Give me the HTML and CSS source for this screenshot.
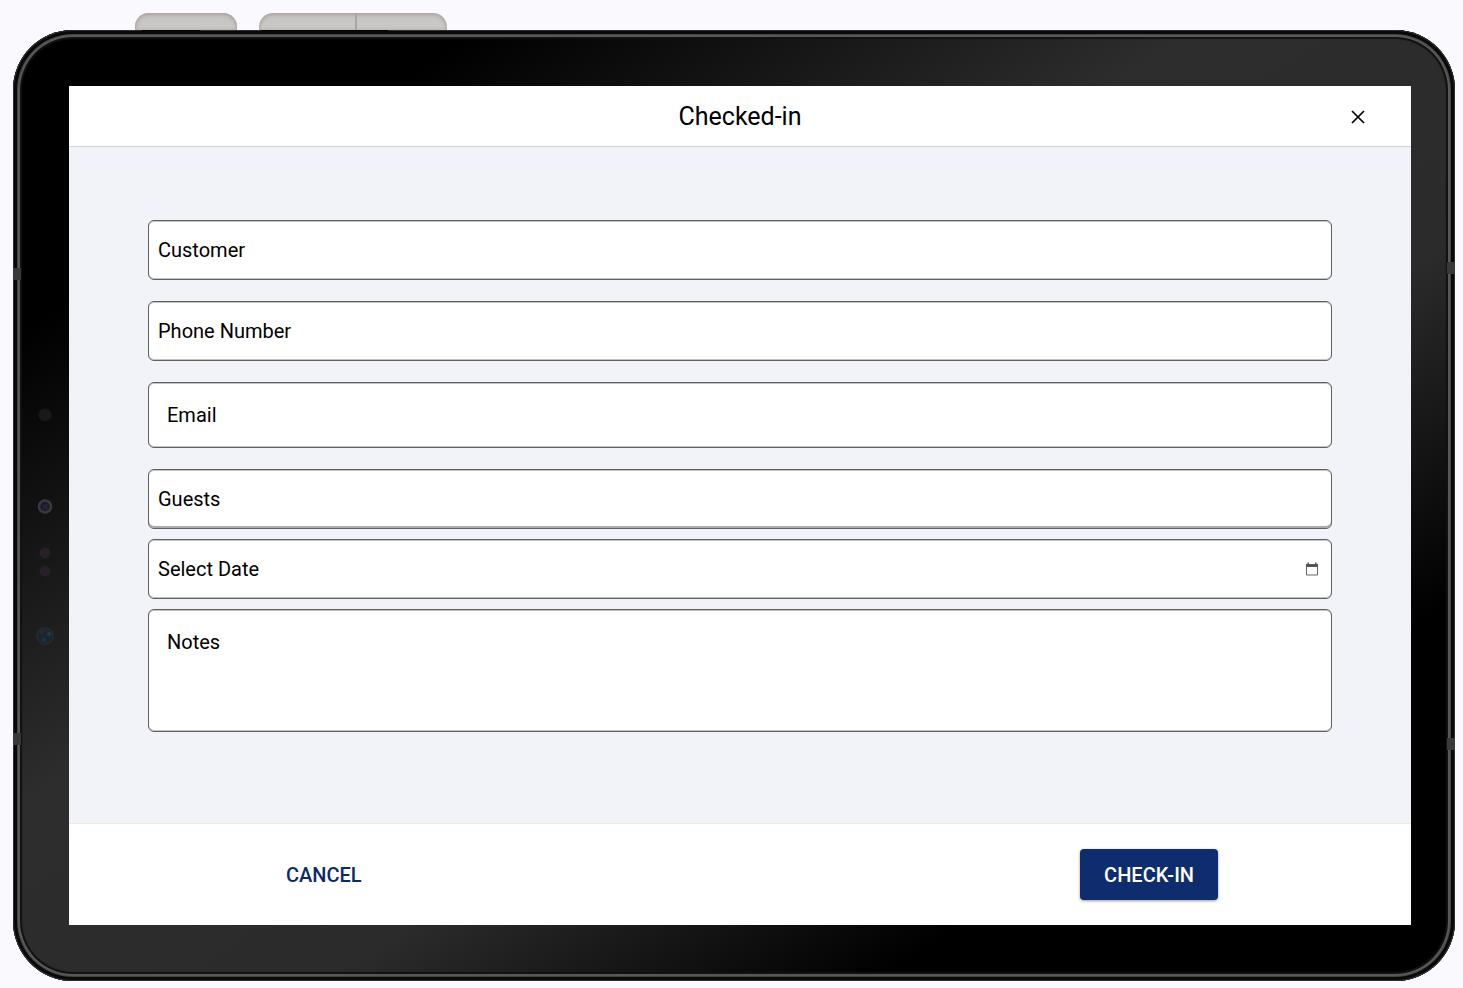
FILE: index.html
```html
<!DOCTYPE html>
<html lang="en">
<head>
<meta charset="utf-8">
<title>Checked-in</title>
<link rel="stylesheet" href="styles.css">
</head>
<body>
<div class="keys">
  <span class="key key-power"></span>
  <span class="key key-volume"></span>
</div>
<div class="tablet">
  <i class="band band-lt"></i><i class="band band-lb"></i><i class="band band-rt"></i><i class="band band-rb"></i>
  <svg class="sensors" width="24" height="260" viewBox="0 0 24 260" aria-hidden="true">
    <circle cx="12" cy="15" r="6.5" fill="#19181a"/>
    <circle cx="12" cy="106.500" r="6" fill="#1d1a29" stroke="#3b393d" stroke-width="2.5"/>
    <path d="M10 105l5 4M14 104l-4 5" stroke="#2a2342" stroke-width="2"/>
    <circle cx="12" cy="153" r="5.5" fill="#281f27"/>
    <circle cx="12" cy="171" r="5.5" fill="#281f2a"/>
    <circle cx="12" cy="236" r="8" fill="#1b252d" stroke="#252a2e" stroke-width="2"/>
    <circle cx="16" cy="234" r="2" fill="#203a48"/>
    <circle cx="11" cy="240" r="2" fill="#1d3644"/>
    <circle cx="9" cy="232" r="2" fill="#202d38"/>
  </svg>
  <main class="screen">
    <header class="header">
      <h1 class="title">Checked-in</h1>
      <button class="close" type="button" aria-label="Close">
        <svg width="14" height="14" viewBox="0 0 14 14"><path d="M1 1l12 12M13 1L1 13" stroke="#000" stroke-width="1.7"/></svg>
      </button>
    </header>
    <form class="form" id="checkin">
      <label class="field spaced"><span>Customer</span><input type="text"></label>
      <label class="field spaced"><span>Phone Number</span><input type="tel"></label>
      <label class="field field-inset spaced"><span>Email</span><input type="email"></label>
      <label class="field field-underlined"><span>Guests</span><input type="text" inputmode="numeric"></label>
      <div class="field">
        <label for="date">Select Date</label><input id="date" type="text">
        <button class="calendar" type="button" aria-label="Open calendar">
          <svg width="14" height="14" viewBox="0 0 14 14"><path d="M1.5 2.500h11v10.500h-11z" fill="none" stroke="#666"/><path d="M1 2h12v3H1zM2.500 .5H4V2H2.500zM10 .5h1.500V2H10z" fill="#555"/></svg>
        </button>
      </div>
      <label class="field field-notes"><span>Notes</span><textarea></textarea></label>
    </form>
    <footer class="footer">
      <button class="btn" type="button">CANCEL</button>
      <button class="btn btn-primary" type="submit" form="checkin">CHECK-IN</button>
    </footer>
  </main>
</div>
</body>
</html>
```
FILE: styles.css
```css
* { box-sizing: border-box; }
body {
  margin: 0;
  min-height: 100vh;
  padding: 13px 8px 7px 13px;
  display: flex;
  flex-direction: column;
  background: #f9f9fe;
  font-family: Roboto, "Liberation Sans", sans-serif;
  color: #000;
}
button, input, textarea { font: inherit; color: inherit; border: 0; background: none; padding: 0; outline: 0; }
button { cursor: pointer; }

.keys { display: flex; gap: 22px; height: 17px; padding-left: 122px; }
.key {
  position: relative;
  border-radius: 14px 14px 0 0;
  background: #c9c7c5;
  box-shadow: inset 0 2px 4px #aaa39e, inset 0 0 3px #b2aca7;
}
.key::after { content: ""; position: absolute; z-index: 1; left: 7px; top: 17px; width: 58px; height: 1px; background: #050505; }
.key-power { width: 102px; }
.key-volume { width: 188px; background: linear-gradient(#aaa5a0, #aaa5a0) 96px 0 / 2px 100% no-repeat #c9c7c5; }
.key-volume::after { left: 2px; width: 127px; }

.tablet {
  position: relative;
  flex: 1;
  display: flex;
  padding: 56px 44px 56px 56px;
  border-radius: 60px;
  background: linear-gradient(to bottom right, #000 16%, #2d2d2d 41%, #2b2b2b 61%, #000 80%);
  box-shadow: inset 0 0 0 1px #303030, inset 0 0 0 4px #080808, inset 0 0 0 5px #444, inset 0 0 0 7px #585858, inset 0 0 1px 9px #111;
}
.band { position: absolute; width: 8px; height: 12px; background: #393939; }
.band-lt { left: 0; top: 238px; }
.band-lb { left: 0; bottom: 236px; }
.band-rt { right: 0; top: 232px; }
.band-rb { right: 0; bottom: 231px; }
.sensors { position: absolute; left: 20px; top: 370px; }

.screen { flex: 1; display: flex; flex-direction: column; background: #f2f3f8; }
.header {
  display: grid;
  grid-template-columns: 1fr auto 1fr;
  align-items: center;
  height: 61px;
  padding: 1px 43px 0;
  background: #fff;
  border-bottom: 1px solid #d2d3d5;
}
.title { grid-column: 2; margin: 0; font-size: 25px; line-height: 32px; font-weight: 400; }
.close { justify-self: end; width: 20px; height: 20px; display: grid; place-items: center; }

.form { flex: 1; display: flex; flex-direction: column; gap: 10px; padding: 73px 79px 24px; }
.field {
  display: flex;
  align-items: center;
  gap: 10px;
  min-height: 60px;
  padding: 0 9px;
  border: 1px solid #606060;
  border-radius: 6px;
  background: #fff;
  box-shadow: inset 0 1px #c4c4c4, inset 0 -1px #c4c4c4;
  font-size: 20px;
  line-height: 24px;
}
.field input, .field textarea { flex: 1; min-width: 0; }
.spaced { margin-bottom: 11px; }
.field-inset { min-height: 66px; padding-left: 18px; }
.field-underlined { box-shadow: inset 0 1px #c4c4c4, inset 0 -2px #aaa; }
.field-notes { min-height: 123px; align-items: flex-start; padding: 20px 18px; }
.field-notes textarea { height: 81px; resize: none; }
.calendar { width: 20px; height: 20px; display: grid; place-items: center; }

.footer {
  display: flex;
  justify-content: space-between;
  align-items: center;
  height: 102px;
  padding: 0 193px;
  background: #fff;
  border-top: 1px solid #e9eaed;
}
.btn { height: 51px; padding: 0 24px; border-radius: 4px; font-size: 20px; font-weight: 500; color: #0b2a6d; }
.btn-primary { background: #0f2d6e; color: #fff; box-shadow: 0 1px 3px #0006; }
```
